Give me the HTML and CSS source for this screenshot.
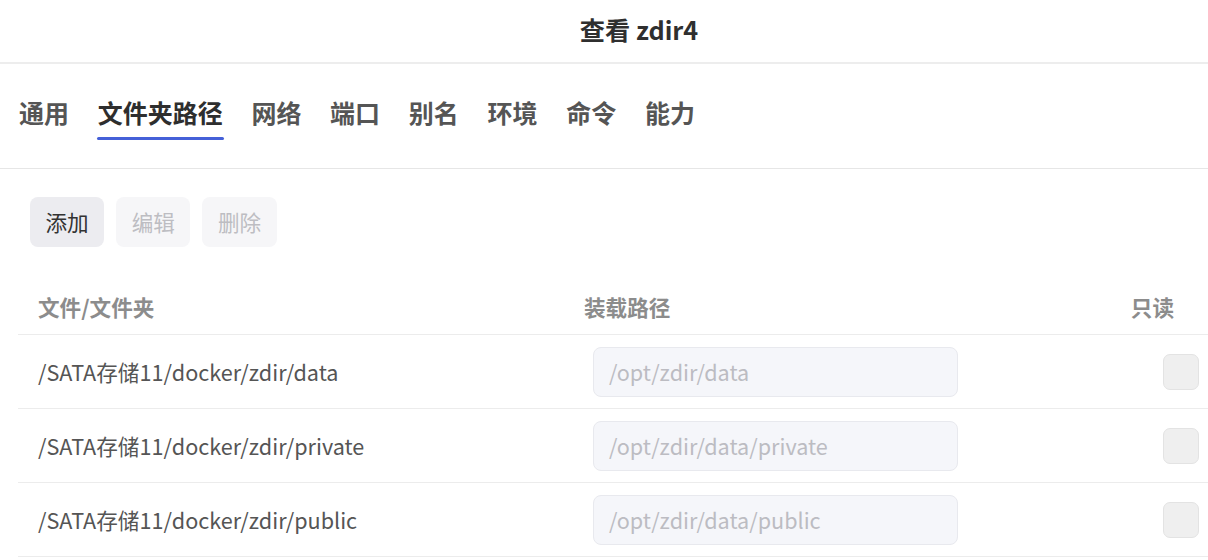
FILE: index.html
```html
<!DOCTYPE html>
<html lang="zh-CN">
<head>
<meta charset="utf-8">
<title>查看 zdir4</title>
<link rel="stylesheet" href="styles.css">
</head>
<body>
<div class="page">
  <header class="title-bar">查看 zdir4</header>
  <nav class="tabs">
    <span class="tab">通用</span>
    <span class="tab active">文件夹路径</span>
    <span class="tab">网络</span>
    <span class="tab">端口</span>
    <span class="tab">别名</span>
    <span class="tab">环境</span>
    <span class="tab">命令</span>
    <span class="tab">能力</span>
  </nav>
  <section class="content">
    <div class="toolbar">
      <button class="btn">添加</button>
      <button class="btn disabled">编辑</button>
      <button class="btn disabled">删除</button>
    </div>
    <div class="table">
      <div class="row head">
        <div class="cell c1">文件/文件夹</div>
        <div class="cell c2">装载路径</div>
        <div class="cell c3">只读</div>
      </div>
      <div class="row">
        <div class="cell c1">/SATA存储11/docker/zdir/data</div>
        <div class="cell c2"><div class="input">/opt/zdir/data</div></div>
        <div class="cell c3"><span class="check"></span></div>
      </div>
      <div class="row">
        <div class="cell c1">/SATA存储11/docker/zdir/private</div>
        <div class="cell c2"><div class="input">/opt/zdir/data/private</div></div>
        <div class="cell c3"><span class="check"></span></div>
      </div>
      <div class="row">
        <div class="cell c1">/SATA存储11/docker/zdir/public</div>
        <div class="cell c2"><div class="input">/opt/zdir/data/public</div></div>
        <div class="cell c3"><span class="check"></span></div>
      </div>
    </div>
  </section>
</div>
</body>
</html>
```
FILE: styles.css
```css
* { box-sizing: border-box; }
html, body {
  margin: 0;
  padding: 0;
  background: #ffffff;
  font-family: "Noto Sans CJK SC", "Noto Sans", sans-serif;
  overflow: hidden;
}
.page { width: 1208px; }

.title-bar {
  height: 64px;
  padding-left: 70px;
  text-align: center;
  font-size: 25.2px;
  font-weight: 700;
  line-height: 58px;
  color: #2f2f2f;
  border-bottom: 2px solid #ededed;
}

.tabs {
  display: flex;
  gap: 28.7px;
  padding: 30px 0 28px 19px;
  border-bottom: 1px solid #e6e6e6;
}
.tab {
  font-size: 25px;
  font-weight: 700;
  line-height: 36px;
  color: #555555;
  display: flex;
  flex-direction: column;
}
.tab::after {
  content: "";
  display: block;
  height: 3px;
  margin: 7px -1px 0;
  border-radius: 2px;
  background: transparent;
}
.tab.active { color: #2e2e2e; }
.tab.active::after { background: #4560d8; }

.content { padding-top: 28px; }
.toolbar {
  display: flex;
  gap: 12px;
  padding-left: 30px;
}
.btn {
  height: 50px;
  padding: 0 15.5px;
  border: none;
  border-radius: 8px;
  background: #ececf0;
  color: #333333;
  font-family: inherit;
  font-size: 21.6px;
  line-height: 50px;
}
.btn.disabled {
  background: #f6f6f8;
  color: #bdbdc2;
}

.table {
  margin: 30px 0 0 18px;
  width: 1190px;
}
.row {
  display: grid;
  grid-template-columns: 546px 470px 174px;
  height: 74px;
  border-bottom: 1px solid #ececec;
  align-items: center;
}
.row.head {
  height: 58px;
  align-items: start;
}
.cell {
  font-size: 21.6px;
  line-height: 28px;
  color: #555555;
}
.c1 { padding-left: 20px; }
.c2 { padding-left: 20px; }
.c3 { display: flex; justify-content: flex-end; }
.head .cell {
  padding-top: 16px;
  font-weight: 700;
  color: #8c8c8c;
}
.head .c3 { padding-right: 34px; }

.input {
  margin-left: 9px;
  width: 365px;
  height: 50px;
  padding-left: 15px;
  border: 1px solid #e8e9ee;
  border-radius: 8px;
  background: #f5f6fa;
  color: #bcbcc2;
  line-height: 48px;
  font-size: 21.6px;
}
.check {
  width: 36px;
  height: 36px;
  margin-right: 9px;
  border: 1px solid #e3e3e3;
  border-radius: 7px;
  background: #efefef;
}
```
